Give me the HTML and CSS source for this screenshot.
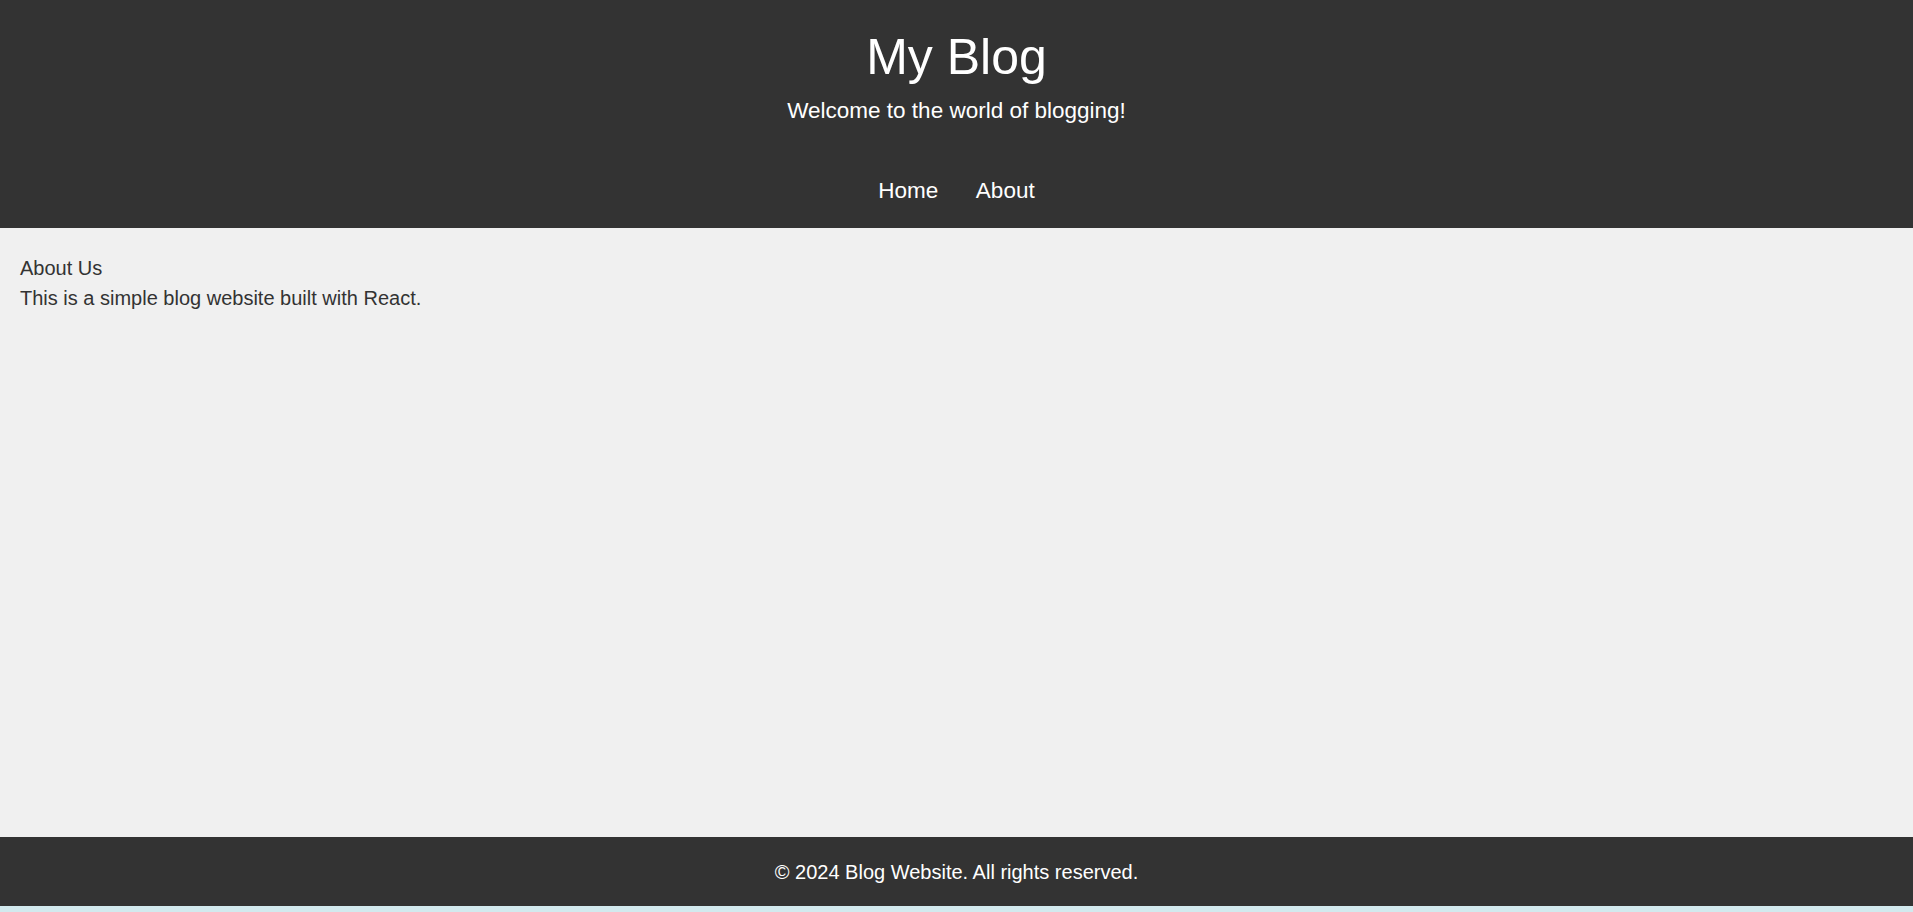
FILE: index.html
```html
<!DOCTYPE html>
<html lang="en">
<head>
<meta charset="utf-8">
<title>My Blog</title>
<link rel="stylesheet" href="styles.css">
</head>
<body>
<div class="app">
  <header class="site-header">
    <h1 class="site-title">My Blog</h1>
    <p class="site-tagline">Welcome to the world of blogging!</p>
    <nav class="site-nav">
      <a href="#" class="nav-link">Home</a>
      <a href="#" class="nav-link">About</a>
    </nav>
  </header>
  <main class="content">
    <h2 class="page-title">About Us</h2>
    <p class="page-text">This is a simple blog website built with React.</p>
  </main>
  <footer class="site-footer">
    <p class="footer-text">&copy; 2024 Blog Website. All rights reserved.</p>
  </footer>
</div>
</body>
</html>
```

FILE: styles.css
```css
* { box-sizing: border-box; }

html, body {
  margin: 0;
  padding: 0;
}

body {
  background: #d2e9ee;
  font-family: "Liberation Sans", Arial, sans-serif;
  color: #333333;
}

.app {
  min-height: calc(100vh - 6px);
  display: flex;
  flex-direction: column;
}

.site-header {
  background: #333333;
  color: #ffffff;
  text-align: center;
  padding: 28px 20px 24px;
  display: flex;
  flex-direction: column;
  align-items: center;
}

.site-title {
  margin: 0;
  font-size: 50px;
  line-height: 58px;
  font-weight: normal;
}

.site-tagline {
  margin: 12px 0 0;
  font-size: 22.5px;
  line-height: 26px;
}

.site-nav {
  margin-top: 54px;
  display: flex;
  justify-content: center;
  gap: 37.5px;
}

.nav-link {
  color: #ffffff;
  text-decoration: none;
  font-size: 22.5px;
  line-height: 26px;
}

.content {
  flex: 1;
  background: #f0f0f0;
  padding: 25px 20px;
}

.page-title,
.page-text {
  margin: 0;
  font-size: 20px;
  line-height: 30px;
  font-weight: normal;
  color: #333333;
}

.site-footer {
  background: #333333;
  color: #ffffff;
  text-align: center;
  padding: 24px 20px 22px;
}

.footer-text {
  margin: 0;
  font-size: 20px;
  line-height: 23px;
}
```
